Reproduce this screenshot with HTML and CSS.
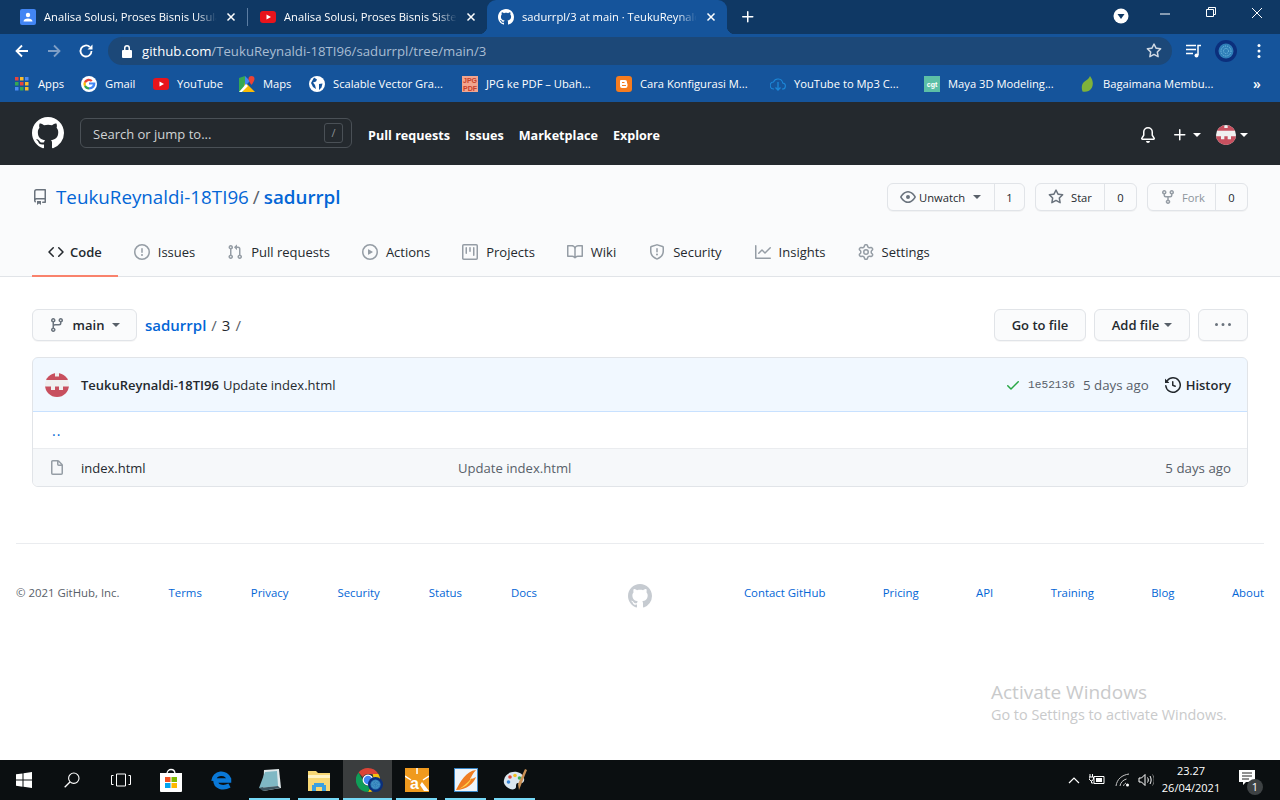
FILE: index.html
```html
<!DOCTYPE html>
<html lang="en">
<head>
<meta charset="utf-8">
<title>sadurrpl/3 at main</title>
<link rel="stylesheet" href="styles.css">
</head>
<body>
<svg class="defs" width="0" height="0" aria-hidden="true">
  <symbol id="i-mark" viewBox="0 0 16 16"><path fill-rule="evenodd" d="M8 0C3.58 0 0 3.58 0 8c0 3.54 2.29 6.53 5.47 7.59.4.07.55-.17.55-.38 0-.19-.01-.82-.01-1.49-2.01.37-2.53-.49-2.69-.94-.09-.23-.48-.94-.82-1.13-.28-.15-.68-.52-.01-.53.63-.01 1.08.58 1.23.82.72 1.21 1.87.87 2.33.66.07-.52.28-.87.51-1.07-1.78-.2-3.64-.89-3.64-3.95 0-.87.31-1.59.82-2.15-.08-.2-.36-1.02.08-2.12 0 0 .67-.21 2.2.82.64-.18 1.32-.27 2-.27.68 0 1.36.09 2 .27 1.53-1.04 2.2-.82 2.2-.82.44 1.1.16 1.92.08 2.12.51.56.82 1.27.82 2.15 0 3.07-1.87 3.75-3.65 3.95.29.25.54.73.54 1.48 0 1.07-.01 1.93-.01 2.2 0 .21.15.46.55.38A8.013 8.013 0 0016 8c0-4.42-3.58-8-8-8z"/></symbol>
  <symbol id="i-code" viewBox="0 0 16 16"><path fill-rule="evenodd" d="M4.72 3.22a.75.75 0 011.06 1.06L2.06 8l3.72 3.72a.75.75 0 11-1.06 1.06L.47 8.53a.75.75 0 010-1.06l4.25-4.25zm6.56 0a.75.75 0 10-1.06 1.06L13.94 8l-3.72 3.72a.75.75 0 101.06 1.06l4.25-4.25a.75.75 0 000-1.06l-4.25-4.25z"/></symbol>
  <symbol id="i-issue" viewBox="0 0 16 16"><path fill-rule="evenodd" d="M8 1.5a6.5 6.5 0 100 13 6.5 6.5 0 000-13zM0 8a8 8 0 1116 0A8 8 0 010 8zm9 3a1 1 0 11-2 0 1 1 0 012 0zm-.25-6.25a.75.75 0 00-1.5 0v3.5a.75.75 0 001.5 0v-3.5z"/></symbol>
  <symbol id="i-pr" viewBox="0 0 16 16"><path fill-rule="evenodd" d="M7.177 3.073L9.573.677A.25.25 0 0110 .854v4.792a.25.25 0 01-.427.177L7.177 3.427a.25.25 0 010-.354zM3.75 2.5a.75.75 0 100 1.5.75.75 0 000-1.5zm-2.25.75a2.25 2.25 0 113 2.122v5.256a2.251 2.251 0 11-1.5 0V5.372A2.25 2.25 0 011.5 3.25zM11 2.5h-1V4h1a1 1 0 011 1v5.628a2.251 2.251 0 101.5 0V5A2.5 2.5 0 0011 2.5zm1 10.25a.75.75 0 111.5 0 .75.75 0 01-1.5 0zM3.75 12a.75.75 0 100 1.5.75.75 0 000-1.5z"/></symbol>
  <symbol id="i-play" viewBox="0 0 16 16"><path fill-rule="evenodd" d="M1.5 8a6.5 6.5 0 1113 0 6.5 6.5 0 01-13 0zM8 0a8 8 0 100 16A8 8 0 008 0zM6.379 5.227A.25.25 0 006 5.442v5.117a.25.25 0 00.379.214l4.264-2.559a.25.25 0 000-.428L6.379 5.227z"/></symbol>
  <symbol id="i-project" viewBox="0 0 16 16"><path fill-rule="evenodd" d="M1.75 0A1.75 1.75 0 000 1.75v12.5C0 15.216.784 16 1.75 16h12.5A1.75 1.75 0 0016 14.25V1.75A1.75 1.75 0 0014.25 0H1.75zM1.5 1.75a.25.25 0 01.25-.25h12.5a.25.25 0 01.25.25v12.5a.25.25 0 01-.25.25H1.75a.25.25 0 01-.25-.25V1.75zM11.75 3a.75.75 0 00-.75.75v7.5a.75.75 0 001.5 0v-7.5a.75.75 0 00-.75-.75zm-8.25.75a.75.75 0 011.5 0v5.5a.75.75 0 01-1.5 0v-5.5zM8 3a.75.75 0 00-.75.75v3.5a.75.75 0 001.5 0v-3.5A.75.75 0 008 3z"/></symbol>
  <symbol id="i-book" viewBox="0 0 16 16"><path fill-rule="evenodd" d="M0 1.75A.75.75 0 01.75 1h4.253c1.227 0 2.317.59 3 1.501A3.744 3.744 0 0111.006 1h4.245a.75.75 0 01.75.75v10.5a.75.75 0 01-.75.75h-4.507a2.25 2.25 0 00-1.591.659l-.622.621a.75.75 0 01-1.06 0l-.622-.621A2.25 2.25 0 005.258 13H.75a.75.75 0 01-.75-.75V1.75zm8.755 3a2.25 2.25 0 012.25-2.25H14.5v9h-3.757c-.71 0-1.4.201-1.992.572l.004-7.322zm-1.504 7.324l.004-5.073-.002-2.253A2.25 2.25 0 005.003 2.5H1.5v9h3.757a3.75 3.75 0 011.994.574z"/></symbol>
  <symbol id="i-shield" viewBox="0 0 16 16"><path fill-rule="evenodd" d="M7.467.133a1.75 1.75 0 011.066 0l5.25 1.68A1.75 1.75 0 0115 3.48V7c0 1.566-.32 3.182-1.303 4.682-.983 1.498-2.585 2.813-5.032 3.855a1.7 1.7 0 01-1.33 0c-2.447-1.042-4.049-2.357-5.032-3.855C1.32 10.182 1 8.566 1 7V3.48a1.75 1.75 0 011.217-1.667l5.25-1.68zm.61 1.429a.25.25 0 00-.153 0l-5.25 1.68a.25.25 0 00-.174.238V7c0 1.358.275 2.666 1.057 3.86.784 1.194 2.121 2.34 4.366 3.297a.2.2 0 00.154 0c2.245-.956 3.582-2.104 4.366-3.298C13.225 9.666 13.5 8.36 13.5 7V3.48a.25.25 0 00-.174-.237l-5.25-1.68zM9 10.5a1 1 0 11-2 0 1 1 0 012 0zm-.25-5.75a.75.75 0 10-1.5 0v3a.75.75 0 001.5 0v-3z"/></symbol>
  <symbol id="i-graph" viewBox="0 0 16 16"><path fill-rule="evenodd" d="M1.5 1.75a.75.75 0 00-1.5 0v12.5c0 .414.336.75.75.75h14.5a.75.75 0 000-1.5H1.5V1.75zm14.28 2.53a.75.75 0 00-1.06-1.06L10 7.94 7.53 5.47a.75.75 0 00-1.06 0L3.22 8.72a.75.75 0 001.06 1.06L7 7.06l2.47 2.47a.75.75 0 001.06 0l5.25-5.25z"/></symbol>
  <symbol id="i-gear" viewBox="0 0 16 16"><path fill-rule="evenodd" d="M7.429 1.525a6.593 6.593 0 011.142 0c.036.003.108.036.137.146l.289 1.105c.147.56.55.967.997 1.189.174.086.341.183.501.29.417.278.97.423 1.53.27l1.102-.303c.11-.03.175.016.195.046.219.31.41.641.573.989.014.031.022.11-.059.19l-.815.806c-.411.406-.562.957-.53 1.456a4.588 4.588 0 010 .582c-.032.499.119 1.05.53 1.456l.815.806c.08.08.073.159.059.19a6.494 6.494 0 01-.573.99c-.02.029-.086.074-.195.045l-1.103-.303c-.559-.153-1.112-.008-1.529.27-.16.107-.327.204-.5.29-.449.222-.851.628-.998 1.189l-.289 1.105c-.029.11-.101.143-.137.146a6.613 6.613 0 01-1.142 0c-.036-.003-.108-.037-.137-.146l-.289-1.105c-.147-.56-.55-.967-.997-1.189a4.502 4.502 0 01-.501-.29c-.417-.278-.97-.423-1.53-.27l-1.102.303c-.11.03-.175-.016-.195-.046a6.492 6.492 0 01-.573-.989c-.014-.031-.022-.11.059-.19l.815-.806c.411-.406.562-.957.53-1.456a4.587 4.587 0 010-.582c.032-.499-.119-1.05-.53-1.456l-.815-.806c-.08-.08-.073-.159-.059-.19a6.44 6.44 0 01.573-.99c.02-.029.086-.075.195-.045l1.103.303c.559.153 1.112.008 1.529-.27.16-.107.327-.204.5-.29.449-.222.851-.628.998-1.189l.289-1.105c.029-.11.101-.143.137-.146zM8 0c-.236 0-.47.01-.701.03-.743.065-1.29.615-1.458 1.261l-.29 1.106c-.017.066-.078.158-.211.224a5.994 5.994 0 00-.668.386c-.123.082-.233.09-.3.071L3.27 2.776c-.644-.177-1.392.02-1.82.63a7.977 7.977 0 00-.704 1.217c-.315.675-.111 1.422.363 1.891l.815.806c.05.048.098.147.088.294a6.084 6.084 0 000 .772c.01.147-.038.246-.088.294l-.815.806c-.474.469-.678 1.216-.363 1.891.2.428.436.835.704 1.218.428.609 1.176.806 1.82.63l1.103-.303c.066-.019.176-.011.299.071.213.143.436.272.668.386.133.066.194.158.212.224l.289 1.106c.169.646.715 1.196 1.458 1.26a8.094 8.094 0 001.402 0c.743-.064 1.29-.614 1.458-1.26l.29-1.106c.017-.066.078-.158.211-.224a5.98 5.98 0 00.668-.386c.123-.082.233-.09.3-.071l1.102.302c.644.177 1.392-.02 1.82-.63.268-.382.505-.789.704-1.217.315-.675.111-1.422-.364-1.891l-.814-.806c-.05-.048-.098-.147-.088-.294a6.1 6.1 0 000-.772c-.01-.147.039-.246.088-.294l.814-.806c.475-.469.679-1.216.364-1.891a7.992 7.992 0 00-.704-1.218c-.428-.609-1.176-.806-1.82-.63l-1.103.303c-.066.019-.176.011-.299-.071a5.991 5.991 0 00-.668-.386c-.133-.066-.194-.158-.212-.224L10.16 1.29C9.99.645 9.444.095 8.701.031A8.094 8.094 0 008 0zm1.5 8a1.5 1.5 0 11-3 0 1.5 1.5 0 013 0zM11 8a3 3 0 11-6 0 3 3 0 016 0z"/></symbol>
  <symbol id="i-repo" viewBox="0 0 16 16"><path fill-rule="evenodd" d="M2 2.5A2.5 2.5 0 014.5 0h8.75a.75.75 0 01.75.75v12.5a.75.75 0 01-.75.75h-2.5a.75.75 0 110-1.5h1.75v-2h-8a1 1 0 00-.714 1.7.75.75 0 01-1.072 1.05A2.495 2.495 0 012 11.5v-9zm10.5-1V9h-8c-.356 0-.694.074-1 .208V2.5a1 1 0 011-1h8zM5 12.25v3.25a.25.25 0 00.4.2l1.45-1.087a.25.25 0 01.3 0L8.6 15.7a.25.25 0 00.4-.2v-3.25a.25.25 0 00-.25-.25h-3.5a.25.25 0 00-.25.25z"/></symbol>
  <symbol id="i-eye" viewBox="0 0 16 16"><path fill-rule="evenodd" d="M1.679 7.932c.412-.621 1.242-1.75 2.366-2.717C5.175 4.242 6.527 3.5 8 3.5c1.473 0 2.824.742 3.955 1.715 1.124.967 1.954 2.096 2.366 2.717a.119.119 0 010 .136c-.412.621-1.242 1.75-2.366 2.717C10.825 11.758 9.473 12.5 8 12.5c-1.473 0-2.824-.742-3.955-1.715C2.92 9.818 2.09 8.69 1.679 8.068a.119.119 0 010-.136zM8 2c-1.981 0-3.67.992-4.933 2.078C1.797 5.169.88 6.423.43 7.1a1.619 1.619 0 000 1.798c.45.678 1.367 1.932 2.637 3.024C4.329 13.008 6.019 14 8 14c1.981 0 3.67-.992 4.933-2.078 1.27-1.091 2.187-2.345 2.637-3.023a1.619 1.619 0 000-1.798c-.45-.678-1.367-1.932-2.637-3.023C11.671 2.992 9.981 2 8 2zm0 8a2 2 0 100-4 2 2 0 000 4z"/></symbol>
  <symbol id="i-star" viewBox="0 0 16 16"><path fill-rule="evenodd" d="M8 .25a.75.75 0 01.673.418l1.882 3.815 4.21.612a.75.75 0 01.416 1.279l-3.046 2.97.719 4.192a.75.75 0 01-1.088.791L8 12.347l-3.766 1.98a.75.75 0 01-1.088-.79l.72-4.194L.818 6.374a.75.75 0 01.416-1.28l4.21-.611L7.327.668A.75.75 0 018 .25zm0 2.445L6.615 5.5a.75.75 0 01-.564.41l-3.097.45 2.24 2.184a.75.75 0 01.216.664l-.528 3.084 2.769-1.456a.75.75 0 01.698 0l2.77 1.456-.53-3.084a.75.75 0 01.216-.664l2.24-2.183-3.096-.45a.75.75 0 01-.564-.41L8 2.694v.001z"/></symbol>
  <symbol id="i-fork" viewBox="0 0 16 16"><path fill-rule="evenodd" d="M5 3.25a.75.75 0 11-1.5 0 .75.75 0 011.5 0zm0 2.122a2.25 2.25 0 10-1.5 0v.878A2.25 2.25 0 005.75 8.5h1.5v2.128a2.251 2.251 0 101.5 0V8.5h1.5a2.25 2.25 0 002.25-2.25v-.878a2.25 2.25 0 10-1.5 0v.878a.75.75 0 01-.75.75h-4.5A.75.75 0 015 6.25v-.878zm3.75 7.378a.75.75 0 11-1.5 0 .75.75 0 011.5 0zm3-8.75a.75.75 0 100-1.5.75.75 0 000 1.5z"/></symbol>
  <symbol id="i-branch" viewBox="0 0 16 16"><path fill-rule="evenodd" d="M11.75 2.5a.75.75 0 100 1.5.75.75 0 000-1.5zm-2.25.75a2.25 2.25 0 113 2.122V6A2.5 2.5 0 0110 8.5H6a1 1 0 00-1 1v1.128a2.251 2.251 0 11-1.5 0V5.372a2.25 2.25 0 111.5 0v1.836A2.492 2.492 0 016 7h4a1 1 0 001-1v-.628A2.25 2.25 0 019.5 3.25zM4.25 12a.75.75 0 100 1.5.75.75 0 000-1.5zM3.5 3.25a.75.75 0 111.5 0 .75.75 0 01-1.5 0z"/></symbol>
  <symbol id="i-check" viewBox="0 0 16 16"><path fill-rule="evenodd" d="M13.78 4.22a.75.75 0 010 1.06l-7.25 7.25a.75.75 0 01-1.06 0L2.22 9.28a.75.75 0 011.06-1.06L6 10.94l6.72-6.72a.75.75 0 011.06 0z"/></symbol>
  <symbol id="i-history" viewBox="0 0 16 16"><path fill-rule="evenodd" d="M1.643 3.143L.427 1.927A.25.25 0 000 2.104V5.75c0 .138.112.25.25.25h3.646a.25.25 0 00.177-.427L2.715 4.215a6.5 6.5 0 11-1.18 4.458.75.75 0 10-1.493.154 8.001 8.001 0 101.6-5.684zM7.75 4a.75.75 0 01.75.75v2.992l2.028.812a.75.75 0 01-.557 1.392l-2.5-1A.75.75 0 017 8.25v-3.5A.75.75 0 017.75 4z"/></symbol>
  <symbol id="i-file" viewBox="0 0 16 16"><path fill-rule="evenodd" d="M3.75 1.5a.25.25 0 00-.25.25v11.5c0 .138.112.25.25.25h8.5a.25.25 0 00.25-.25V6H9.75A1.75 1.75 0 018 4.25V1.5H3.75zm5.75.56v2.19c0 .138.112.25.25.25h2.19L9.5 2.06zM2 1.75C2 .784 2.784 0 3.75 0h5.086c.464 0 .909.184 1.237.513l3.414 3.414c.329.328.513.773.513 1.237v8.086A1.75 1.75 0 0112.25 15h-8.5A1.75 1.75 0 012 13.25V1.75z"/></symbol>
  <symbol id="i-bell" viewBox="0 0 16 16"><path d="M8 16a2 2 0 001.985-1.75c.017-.137-.097-.25-.235-.25h-3.5c-.138 0-.252.113-.235.25A2 2 0 008 16z"/><path fill-rule="evenodd" d="M3 5a5 5 0 0110 0v2.947c0 .05.015.098.042.139l1.703 2.555A1.518 1.518 0 0113.482 13H2.518a1.518 1.518 0 01-1.263-2.36l1.703-2.554A.25.25 0 003 7.947V5zm5-3.5A3.5 3.5 0 004.5 5v2.947c0 .346-.102.683-.294.97l-1.703 2.556a.018.018 0 00-.003.01l.001.006c0 .002.002.004.004.006a.017.017 0 00.006.004l.007.001h10.964l.007-.001a.018.018 0 00.006-.004.016.016 0 00.004-.006l.001-.007a.017.017 0 00-.003-.01l-1.703-2.554a1.75 1.75 0 01-.294-.97V5A3.5 3.5 0 008 1.5z"/></symbol>
  <symbol id="i-plus" viewBox="0 0 16 16"><path fill-rule="evenodd" d="M7.75 2a.75.75 0 01.75.75V7h4.25a.75.75 0 110 1.5H8.5v4.25a.75.75 0 11-1.5 0V8.5H2.75a.75.75 0 010-1.5H7V2.75A.75.75 0 017.75 2z"/></symbol>
  <symbol id="i-kebab" viewBox="0 0 16 16"><path d="M8 9a1.5 1.5 0 100-3 1.5 1.5 0 000 3zM1.5 9a1.5 1.5 0 100-3 1.5 1.5 0 000 3zm13 0a1.5 1.5 0 100-3 1.5 1.5 0 000 3z"/></symbol>
  <symbol id="i-x" viewBox="0 0 10 10"><path d="M1.5 1.5l7 7m0-7l-7 7" fill="none" stroke="currentColor" stroke-width="1.5"/></symbol>
  <symbol id="i-yt" viewBox="0 0 16 16"><rect x="0" y="2" width="16" height="12" rx="3" fill="#e8141c"/><path d="M6.5 5.5v5L11 8z" fill="#fff"/></symbol>
  <clipPath id="avatar-clip"><circle cx="12" cy="12" r="12"/></clipPath>
  <symbol id="i-avatar" viewBox="0 0 24 24"><g clip-path="url(#avatar-clip)"><rect width="24" height="24" fill="#f0f0f0"/><path d="M0 0h10v3.500h4V0h10v7H0z" fill="#c8505f"/><path d="M0 13.500h6v3.500h4v-3.500h4v3.500h4v-3.500h6V24H0z" fill="#c8505f"/></g></symbol>
  <symbol id="i-chrome" viewBox="0 0 16 16"><path d="M8 0a8 8 0 0 1 6.930 4H8a4 4 0 0 0-3.460 2L1.700 3A8 8 0 0 1 8 0z" fill="#db4437"/><path d="M14.930 4A8 8 0 0 1 8 16l3.460-6A4 4 0 0 0 11.460 6 4 4 0 0 0 11 4z" fill="#f4c20d"/><path d="M8 16A8 8 0 0 1 1.700 3l2.840 5A4 4 0 0 0 8 12l1.900 0L8 16z" fill="#0f9d58"/><circle cx="8" cy="8" r="3.200" fill="#4285f4" stroke="#fff" stroke-width=".8"/></symbol>
  <symbol id="i-globe" viewBox="0 0 22 22"><circle cx="11" cy="11" r="11" fill="#0b2f7c"/><circle cx="11" cy="11" r="7.500" fill="#2f7fb8"/><circle cx="11" cy="11" r="5" fill="none" stroke="#7cc3e6" stroke-width="1" stroke-dasharray="1 1"/><circle cx="11" cy="11" r="2.500" fill="none" stroke="#7cc3e6" stroke-width="1" stroke-dasharray="1 1"/></symbol>
</svg>

<header class="tabstrip">
  <div class="tab">
    <svg class="fav" viewBox="0 0 16 16"><rect width="16" height="16" rx="2" fill="#4285f4"/><circle cx="8" cy="6" r="2.200" fill="#fff"/><path d="M3.500 12.500c0-2 2-3 4.500-3s4.500 1 4.500 3z" fill="#fff"/></svg>
    <span class="tab-title">Analisa Solusi, Proses Bisnis Usula</span>
    <svg class="tab-x"><use href="#i-x"/></svg>
  </div>
  <div class="tab tab-sep">
    <svg class="fav"><use href="#i-yt"/></svg>
    <span class="tab-title">Analisa Solusi, Proses Bisnis Sister</span>
    <svg class="tab-x"><use href="#i-x"/></svg>
  </div>
  <div class="tab tab-active">
    <svg class="fav fav-white"><use href="#i-mark"/></svg>
    <span class="tab-title">sadurrpl/3 at main · TeukuReynald</span>
    <svg class="tab-x"><use href="#i-x"/></svg>
  </div>
  <svg class="newtab"><use href="#i-plus"/></svg>
  <div class="strip-right">
    <svg class="media-drop" viewBox="0 0 16 16"><circle cx="8" cy="8" r="7.500" fill="#fff"/><path d="M4.500 6h7L8 11z" fill="#0f3864"/></svg>
    <svg class="win-btn" viewBox="0 0 46 20"><path d="M18 14h10" stroke="#fff" fill="none"/></svg>
    <svg class="win-btn" viewBox="0 0 46 20"><path d="M18.500 9.500h7v7h-7zM20.500 9.500v-2h7v7h-2" stroke="#fff" fill="none"/></svg>
    <svg class="win-btn" viewBox="0 0 46 20"><path d="M18 8l10 10m0-10l-10 10" stroke="#fff" fill="none"/></svg>
  </div>
</header>

<nav class="toolbar">
  <svg class="tool" viewBox="0 0 16 16"><path d="M14 8H3m5-5.500L2.500 8 8 13.500" fill="none" stroke="#fff" stroke-width="1.800"/></svg>
  <svg class="tool" viewBox="0 0 16 16"><path d="M2 8h11m-5-5.500L13.500 8 8 13.500" fill="none" stroke="#7f9fc6" stroke-width="1.800"/></svg>
  <svg class="tool" viewBox="0 0 16 16"><path d="M13.500 8A5.500 5.500 0 1 1 11.800 4" fill="none" stroke="#fff" stroke-width="1.800"/><path d="M14.500 1.500v5h-5z" fill="#fff"/></svg>
  <div class="omnibox">
    <svg class="lock" viewBox="0 0 12 14"><path d="M3 6V4a3 3 0 0 1 6 0v2h1a1 1 0 0 1 1 1v6a1 1 0 0 1-1 1H2a1 1 0 0 1-1-1V7a1 1 0 0 1 1-1zm1.500 0h3V4a1.500 1.500 0 0 0-3 0z" fill="#fff"/></svg>
    <span class="url"><b class="url-host">github.com</b>/TeukuReynaldi-18TI96/sadurrpl/tree/main/3</span>
    <svg class="omni-star"><use href="#i-star"/></svg>
  </div>
  <svg class="media-q" viewBox="0 0 16 16"><path d="M0 2.500h10M0 6.500h10M0 10.500h7" stroke="#fff" stroke-width="1.500" fill="none"/><path d="M12 12V2.500h3" stroke="#fff" stroke-width="1.500" fill="none"/><circle cx="10.500" cy="12.500" r="2" fill="#fff"/></svg>
  <svg class="profile"><use href="#i-globe"/></svg>
  <svg class="dots" viewBox="0 0 4 16"><circle cx="2" cy="2.500" r="1.500" fill="#fff"/><circle cx="2" cy="8" r="1.500" fill="#fff"/><circle cx="2" cy="13.500" r="1.500" fill="#fff"/></svg>
</nav>

<div class="bookmarks">
  <div class="bm"><svg class="bm-ic bm-apps" viewBox="0 0 14 14"><path d="M0 0h3.500v3.500H0z" fill="#e8453c"/><path d="M5 0h3.500v3.500H5z" fill="#f9bb2d"/><path d="M10 0h3.500v3.500H10z" fill="#4a8af4"/><path d="M0 5h3.500v3.500H0z" fill="#34a853"/><path d="M5 5h3.500v3.500H5z" fill="#e8453c"/><path d="M10 5h3.500v3.500H10z" fill="#f9bb2d"/><path d="M0 10h3.500v3.500H0z" fill="#4a8af4"/><path d="M5 10h3.500v3.500H5z" fill="#34a853"/><path d="M10 10h3.500v3.500H10z" fill="#f9bb2d"/></svg><span>Apps</span></div>
  <div class="bm"><svg class="bm-ic" viewBox="0 0 16 16"><circle cx="8" cy="8" r="8" fill="#fff"/><path d="M8 6.500h6.300c.5 3.800-2 7-6.300 7v-2.300c2 0 3.500-1 3.900-2.600H8z" fill="#4285f4"/><path d="M8 11.200v2.300a5.500 5.500 0 0 1-5-3l1.900-1.500c.5 1.300 1.700 2.200 3.100 2.200z" fill="#34a853"/><path d="M4.900 9L3 10.500a5.500 5.500 0 0 1 0-5L4.900 7a3.300 3.300 0 0 0 0 2z" fill="#fbbc05"/><path d="M3 5.500a5.500 5.500 0 0 1 8.600-1.300L10 5.800A3.300 3.300 0 0 0 4.900 7z" fill="#ea4335"/></svg><span>Gmail</span></div>
  <div class="bm"><svg class="bm-ic"><use href="#i-yt"/></svg><span>YouTube</span></div>
  <div class="bm"><svg class="bm-ic" viewBox="0 0 16 16"><path d="M0 2l6-2v16l-6 0z" fill="#34a853"/><path d="M6 6L16 16H4z" fill="#fbbc05"/><path d="M6 0l5 5-5 5z" fill="#4285f4"/><path d="M0 16l7-8 2 2-6 6z" fill="#fff"/><path d="M12.500 0A3 3 0 0 0 9.500 3c0 2 3 6 3 6s3-4 3-6a3 3 0 0 0-3-3z" fill="#ea4335"/></svg><span>Maps</span></div>
  <div class="bm"><svg class="bm-ic" viewBox="0 0 16 16"><circle cx="8" cy="8" r="8" fill="#fff"/><path d="M5 1.500l3 2-1 2-3 1 2 2.500 1 4-3-2-2-4zM10 8l3.500-.5-1 4-2.500 2.500z" fill="#14549c"/></svg><span>Scalable Vector Gra...</span></div>
  <div class="bm"><svg class="bm-ic" viewBox="0 0 16 16"><rect width="16" height="16" fill="#f2a58e"/><text x="8" y="7" class="tiny-svg">JPG</text><text x="8" y="14.500" class="tiny-svg">PDF</text></svg><span>JPG ke PDF – Ubah...</span></div>
  <div class="bm"><svg class="bm-ic" viewBox="0 0 16 16"><rect width="16" height="16" rx="3" fill="#f57c1f"/><path d="M5 4h4a2 2 0 0 1 2 2v1a1 1 0 0 0 .5.800V10a2 2 0 0 1-2 2H6a2 2 0 0 1-2-2V5a1 1 0 0 1 1-1z" fill="#fff"/><path d="M6 6h2.500v1H6zM6 9h4v1H6z" fill="#f57c1f"/></svg><span>Cara Konfigurasi M...</span></div>
  <div class="bm"><svg class="bm-ic" viewBox="0 0 16 16"><path d="M4 13a3.500 3.500 0 0 1-.5-7 4.800 4.800 0 0 1 9.200 1A3 3 0 0 1 12 13" fill="none" stroke="#1c87d8" stroke-width="1.100"/><path d="M8 6v8m-2.500-2.500L8 14l2.500-2.500" fill="none" stroke="#1c87d8" stroke-width="1.300"/></svg><span>YouTube to Mp3 C...</span></div>
  <div class="bm"><svg class="bm-ic" viewBox="0 0 16 16"><rect width="16" height="16" fill="#5cbfa6"/><text x="8" y="10.500" class="tiny-svg tiny-white">cgt</text></svg><span>Maya 3D Modeling...</span></div>
  <div class="bm"><svg class="bm-ic" viewBox="0 0 16 16"><path d="M11 0C14 4 14.500 8 13 11.500 11.500 15 7 16.500 3.500 15.500 2 11 3 8 5 6c2-2 5-3 6-6z" fill="#7fb23a"/></svg><span>Bagaimana Membu...</span></div>
  <span class="bm-more">»</span>
</div>

<header class="gh-head">
  <svg class="gh-logo"><use href="#i-mark"/></svg>
  <div class="gh-search"><span class="gh-search-text">Search or jump to...</span><kbd class="gh-slash">/</kbd></div>
  <a class="gh-link">Pull requests</a>
  <a class="gh-link">Issues</a>
  <a class="gh-link">Marketplace</a>
  <a class="gh-link">Explore</a>
  <div class="gh-right">
    <svg class="gh-ic"><use href="#i-bell"/></svg>
    <svg class="gh-ic gh-plus"><use href="#i-plus"/></svg>
    <i class="caret caret-white"></i>
    <svg class="gh-avatar"><use href="#i-avatar"/></svg>
    <i class="caret caret-white"></i>
  </div>
</header>

<section class="repo-head">
  <div class="repo-title-row">
    <h1 class="repo-title">
      <svg class="ic ic-muted repo-ic"><use href="#i-repo"/></svg>
      <a class="link">TeukuReynaldi-18TI96</a><span class="repo-slash">/</span><a class="link repo-name">sadurrpl</a>
    </h1>
    <div class="repo-actions">
      <div class="pair"><span class="pair-main w-unwatch"><svg class="ic ic-muted"><use href="#i-eye"/></svg>Unwatch<i class="caret caret-dark caret-gap"></i></span><span class="pair-count c-1">1</span></div>
      <div class="pair"><span class="pair-main w-star"><svg class="ic ic-muted"><use href="#i-star"/></svg>Star</span><span class="pair-count c-2">0</span></div>
      <div class="pair"><span class="pair-main w-fork pair-dim"><svg class="ic ic-dim"><use href="#i-fork"/></svg>Fork</span><span class="pair-count c-3">0</span></div>
    </div>
  </div>
  <nav class="repo-tabs">
    <a class="rtab rtab-on"><svg class="ic ic-dark"><use href="#i-code"/></svg>Code</a>
    <a class="rtab"><svg class="ic ic-dim"><use href="#i-issue"/></svg>Issues</a>
    <a class="rtab"><svg class="ic ic-dim"><use href="#i-pr"/></svg>Pull requests</a>
    <a class="rtab"><svg class="ic ic-dim"><use href="#i-play"/></svg>Actions</a>
    <a class="rtab"><svg class="ic ic-dim"><use href="#i-project"/></svg>Projects</a>
    <a class="rtab"><svg class="ic ic-dim"><use href="#i-book"/></svg>Wiki</a>
    <a class="rtab rtab-nudge"><svg class="ic ic-dim"><use href="#i-shield"/></svg>Security</a>
    <a class="rtab rtab-nudge"><svg class="ic ic-dim"><use href="#i-graph"/></svg>Insights</a>
    <a class="rtab"><svg class="ic ic-dim"><use href="#i-gear"/></svg>Settings</a>
  </nav>
</section>

<main class="content">
  <div class="path-row">
    <button class="btn btn-branch"><svg class="ic ic-muted"><use href="#i-branch"/></svg><span>main</span><i class="caret caret-dark"></i></button>
    <div class="crumbs"><a class="link crumb-root">sadurrpl</a><span class="crumb-sep">/</span><span class="crumb-cur">3</span><span class="crumb-sep">/</span></div>
    <div class="path-actions">
      <button class="btn btn-goto">Go to file</button>
      <button class="btn btn-add">Add file<i class="caret caret-dark"></i></button>
      <button class="btn btn-more"><svg class="ic ic-muted"><use href="#i-kebab"/></svg></button>
    </div>
  </div>

  <div class="filebox">
    <div class="commit">
      <svg class="commit-avatar"><use href="#i-avatar"/></svg>
      <span class="commit-author">TeukuReynaldi-18TI96</span>
      <span class="commit-msg">Update index.html</span>
      <div class="commit-right">
        <svg class="ic ic-green"><use href="#i-check"/></svg>
        <code class="sha">1e52136</code>
        <span class="age">5 days ago</span>
        <span class="history"><svg class="ic ic-dark"><use href="#i-history"/></svg>History</span>
      </div>
    </div>
    <div class="row row-up"><a class="link up">..</a></div>
    <div class="row row-file">
      <svg class="ic ic-file"><use href="#i-file"/></svg>
      <span class="fname">index.html</span>
      <span class="fmsg">Update index.html</span>
      <span class="age fage">5 days ago</span>
    </div>
  </div>
</main>

<footer class="footer">
  <div class="foot-inner">
    <div class="foot-group foot-left"><span class="foot-copy">© 2021 GitHub, Inc.</span><a class="link">Terms</a><a class="link">Privacy</a><a class="link">Security</a><a class="link">Status</a><a class="link">Docs</a></div>
    <svg class="foot-logo"><use href="#i-mark"/></svg>
    <div class="foot-group foot-right"><a class="link">Contact GitHub</a><a class="link">Pricing</a><a class="link">API</a><a class="link">Training</a><a class="link">Blog</a><a class="link">About</a></div>
  </div>
</footer>

<aside class="activate"><div class="act-1">Activate Windows</div><div class="act-2">Go to Settings to activate Windows.</div></aside>

<footer class="taskbar">
  <div class="tb-item"><svg class="tb-ic tb-win" viewBox="0 0 16 16"><path d="M0 2.300l6.500-.9v6.200H0zM7.500 1.300L16 0v7.600H7.500zM0 8.600h6.500v6.100L0 13.800zM7.500 8.600H16V16l-8.500-1.200z" fill="#fff"/></svg></div>
  <div class="tb-item"><svg class="tb-ic" viewBox="0 0 16 16"><circle cx="9.800" cy="6.200" r="5.200" fill="none" stroke="#fff" stroke-width="1.100"/><path d="M6 10L.7 15.300" stroke="#fff" stroke-width="1.300"/></svg></div>
  <div class="tb-item tb-task"><svg class="tb-ic tb-wide" viewBox="0 0 20 14"><path d="M5.500 1h9v12h-9z" fill="none" stroke="#fff"/><path d="M2.500 2.500H.5v9h2M17.500 2.500h2v9h-2" fill="none" stroke="#fff"/></svg></div>
  <div class="tb-item tb-store"><svg class="tb-ic tb-big" viewBox="0 0 24 24"><path d="M8 6c0-6 8-6 8 0" fill="none" stroke="#fff" stroke-width="1.300"/><path d="M1 5h22v18a1 1 0 0 1-1 1H2a1 1 0 0 1-1-1z" fill="#fff"/><path d="M6 9h5.500v5H6z" fill="#f25022"/><path d="M12.500 9H18v5h-5.500z" fill="#7fba00"/><path d="M6 15h5.500v5H6z" fill="#00a4ef"/><path d="M12.500 15H18v5h-5.500z" fill="#ffb900"/></svg></div>
  <div class="tb-item tb-edge"><svg class="tb-ic tb-big" viewBox="0 0 24 24"><path d="M4.500 13a8 8 0 0 1 15.500-2v1.500H7M6.500 12.500c0 6.500 7.500 8.500 14 5" fill="none" stroke="#0a78d7" stroke-width="4.500"/></svg></div>
  <div class="tb-item tb-open"><svg class="tb-ic tb-big" viewBox="0 0 24 24"><path d="M6 2L21 1l2 19-18 3z" fill="#dfe8ea"/><path d="M1 20L7 4l12-1 1 15z" fill="#7fb8c4"/><path d="M1 20l19-2 2 2-17 3z" fill="#3d5560"/></svg></div>
  <div class="tb-item tb-open"><svg class="tb-ic tb-big" viewBox="0 0 24 24"><path d="M1 3h8l2 2h12v18H1z" fill="#f7d774"/><path d="M1 7h22v3H1z" fill="#fff3c4"/><path d="M7 15h10v2h2v6h-4v-4H9v4H5v-6h2z" fill="#3aa0e0"/></svg></div>
  <div class="tb-item tb-chrome tb-open">
    <svg class="tb-ic tb-big"><use href="#i-chrome"/></svg>
    <svg class="tb-badge"><use href="#i-globe"/></svg>
  </div>
  <div class="tb-item tb-open"><svg class="tb-ic tb-big" viewBox="0 0 24 24"><rect width="24" height="24" fill="#f09a1e"/><path d="M12 0v6M0 8l6 4M24 8l-6 4" stroke="#fff" stroke-width="1.500"/><text x="5" y="21" class="tb-a">a</text><path d="M17 14l7 9h-5l-4-6z" fill="#fff"/></svg></div>
  <div class="tb-item tb-open"><svg class="tb-ic tb-big" viewBox="0 0 24 24"><rect x=".5" y=".5" width="23" height="23" fill="#eef4fa" stroke="#3a87c8"/><path d="M2 22C6 14 12 3 22 2c-3 3-4 6-6 9 2 0 4-1 6-2-2 6-9 13-20 13z" fill="#ef7d22"/><path d="M5 21c3-2 9-6 13-12-1 4-5 10-13 12z" fill="#ffd24a"/></svg></div>
  <div class="tb-item tb-open"><svg class="tb-ic tb-big" viewBox="0 0 24 24"><path d="M1 12C2 6 8 3 14 4c5 1 8 5 7 9-1 3-4 2-6 2s-2 2-2 4-3 3-6 2c-4-2-7-5-6-9z" fill="#dbe6ef"/><circle cx="7" cy="9" r="1.800" fill="#e0483c"/><circle cx="12" cy="7.500" r="1.800" fill="#f4c020"/><circle cx="16.500" cy="10" r="1.800" fill="#3cb054"/><circle cx="5.500" cy="14" r="1.800" fill="#3a87d8"/><path d="M15 16L22 1l2 1-6 15-2 5z" fill="#c99055"/></svg></div>

  <div class="tray">
    <svg class="tray-ic tray-caret" viewBox="0 0 12 8"><path d="M1 7l5-5 5 5" fill="none" stroke="#fff" stroke-width="1.200"/></svg>
    <svg class="tray-ic tray-batt" viewBox="0 0 16 12"><path d="M1 0v3M3.500 0v3M0 3h4.500v2L3 7H2L0 5zM2.500 7v2h2" fill="none" stroke="#fff"/><path d="M5 2.500h10v7H5z" fill="none" stroke="#fff"/><path d="M7 4h6v4H7z" fill="#fff"/></svg>
    <svg class="tray-ic tray-wifi" viewBox="0 0 16 14"><path d="M1 13C2 6 7 2 14 1M5 13c.5-3.500 3-6 6.500-7M8.500 13c.3-1.200 1-2.200 2.500-3" fill="none" stroke="#c8c8c8"/><circle cx="12.500" cy="12" r="1.500" fill="#fff"/></svg>
    <svg class="tray-ic tray-sound" viewBox="0 0 16 14"><path d="M1 5h2.500L7 1.500v11L3.500 9H1z" fill="none" stroke="#fff"/><path d="M9.500 4.500c1 1.500 1 3.500 0 5M12 3c1.500 2.500 1.500 5.500 0 8" fill="none" stroke="#fff"/><path d="M14.500 1.500c2 3 2 8 0 11" fill="none" stroke="#777"/></svg>
    <div class="clock"><div>23.27</div><div>26/04/2021</div></div>
    <div class="notif">
      <svg class="tray-ic notif-ic" viewBox="0 0 16 16"><path d="M0 0h16v12H7l-3 3v-3H0z" fill="#fff"/><path d="M3 3h10M3 6h10M3 9h7" stroke="#222" stroke-width="1"/></svg>
      <span class="notif-badge">1</span>
    </div>
  </div>
</footer>
</body>
</html>
```

FILE: styles.css
```css
* { box-sizing: border-box; }
html, body { margin: 0; padding: 0; }
body {
  width: 1280px;
  height: 800px;
  overflow: hidden;
  display: flex;
  flex-direction: column;
  position: relative;
  background: #fff;
  font-family: "Open Sans", "Noto Sans", sans-serif;
  font-size: 13px;
  color: #24292e;
}
.defs { position: absolute; }
a { color: inherit; text-decoration: none; }
svg { display: block; flex: none; }
b { font-weight: 600; }

/* Browser tab strip */
.tabstrip {
  height: 34px;
  flex: none;
  display: flex;
  align-items: stretch;
  padding-left: 7px;
  background: #0f3864;
  color: #fff;
}
.tab {
  width: 240px;
  display: flex;
  align-items: center;
  padding: 0 11px 0 13px;
  font-size: 11.2px;
  position: relative;
}
.tab-sep::before {
  content: "";
  position: absolute;
  left: 0;
  top: 8px;
  height: 18px;
  width: 1px;
  background: #5b7da3;
}
.tab-active {
  background: #15549b;
  border-radius: 9px 9px 0 0;
  padding-left: 11px;
}
.tab-active::before, .tab-active::after {
  content: "";
  position: absolute;
  bottom: 0;
  width: 8px;
  height: 8px;
}
.tab-active::before { left: -8px; background: radial-gradient(circle at 0 0, transparent 8px, #15549b 8.5px); }
.tab-active::after { right: -8px; background: radial-gradient(circle at 100% 0, transparent 8px, #15549b 8.5px); }
.fav { width: 16px; height: 16px; margin-right: 8px; margin-top: -1px; }
.fav-white { fill: #fff; }
.tab-title {
  flex: 1;
  margin-top: -2px;
  white-space: nowrap;
  -webkit-mask-image: linear-gradient(90deg, #000 85%, transparent 96%);
  mask-image: linear-gradient(90deg, #000 85%, transparent 96%);
}
.tab-x { width: 10px; height: 10px; margin-left: 2px; color: #fff; margin-top: -1px; }
.newtab { width: 16px; height: 16px; fill: #fff; align-self: center; margin-left: 13px; margin-top: -1px; }
.strip-right { margin-left: auto; display: flex; align-items: flex-start; }
.media-drop { width: 16px; height: 16px; margin: 8px 13px 0 0; }
.win-btn { width: 46px; height: 20px; }

/* Browser toolbar */
.toolbar {
  height: 34px;
  flex: none;
  display: flex;
  align-items: center;
  padding-left: 14px;
  background: #15549b;
  color: #fff;
}
.tool { width: 16px; height: 16px; margin-right: 16px; }
.omnibox {
  width: 1064px;
  height: 28px;
  margin-left: -2px;
  border-radius: 14px;
  background: #1c4878;
  display: flex;
  align-items: center;
  padding: 0 10px 0 13px;
  font-size: 13.2px;
  color: #a9bdd3;
}
.lock { width: 12px; height: 14px; margin-right: 9px; }
.url { flex: 1; white-space: nowrap; }
.url-host { color: #fff; font-weight: 400; }
.omni-star { width: 16px; height: 16px; fill: #cfd8e3; }
.media-q { width: 16px; height: 16px; margin-left: 14px; }
.profile { width: 22px; height: 22px; margin-left: 13px; }
.dots { width: 4px; height: 16px; margin-left: 20px; }

/* Bookmarks bar */
.bookmarks {
  height: 34px;
  flex: none;
  display: grid;
  grid-template-columns: 66px 72px 86px 70px 153px 154px 154px 154px 155px 174px 1fr;
  align-items: center;
  padding: 0 0 3px 15px;
  background: #15549b;
  color: #fff;
  font-size: 11.2px;
}
.bm { display: flex; align-items: center; white-space: nowrap; }
.bm-ic { width: 16px; height: 16px; margin-right: 8px; }
.bm-apps { width: 14px; height: 14px; margin-right: 9px; }
.tiny-svg { font: 700 7px "Liberation Sans", sans-serif; text-anchor: middle; fill: #c8402a; }
.tiny-white { fill: #fff; }
.bm-more { font-size: 14px; font-weight: 600; }

/* GitHub header */
.gh-head {
  height: 63px;
  flex: none;
  display: flex;
  align-items: center;
  padding: 0 32px;
  background: #24292e;
  color: #fff;
}
.gh-logo { width: 32px; height: 32px; fill: #fff; margin-right: 16px; margin-top: -1px; }
.gh-search {
  width: 272px;
  height: 30px;
  margin-top: -2px;
  border: 1px solid #4a5056;
  border-radius: 6px;
  display: flex;
  align-items: center;
  justify-content: space-between;
  padding: 0 8px 0 12px;
  color: #d0d3d5;
  font-size: 13px;
  margin-right: 16px;
}
.gh-search-text { margin-top: 2px; }
.gh-slash {
  width: 19px;
  height: 20px;
  border: 1px solid #4a5056;
  border-radius: 3px;
  display: flex;
  align-items: center;
  justify-content: center;
  font: 11px "Open Sans", sans-serif;
  color: #8b9095;
}
.gh-link { font-weight: 700; font-size: 12.6px; margin-right: 15px; margin-top: 3px; white-space: nowrap; }
.gh-right { margin-left: auto; margin-top: 3px; display: flex; align-items: center; }
.gh-ic { width: 16px; height: 16px; fill: #fff; }
.gh-plus { margin-left: 16px; margin-right: 5px; }
.gh-avatar { width: 20px; height: 20px; margin: 0 4px 0 15px; }
.caret { display: inline-block; width: 0; height: 0; border: 4px solid transparent; border-top-color: #586069; border-bottom: 0; flex: none; }
.caret-white { border-top-color: #fff; }
.caret-dark { border-top-color: #586069; }

/* Repo header */
.repo-head {
  height: 112px;
  flex: none;
  background: #fafbfc;
  border-bottom: 1px solid #e1e4e8;
  padding: 18px 32px 0;
  display: flex;
  flex-direction: column;
  justify-content: space-between;
}
.repo-title-row { display: flex; justify-content: space-between; align-items: center; height: 28px; }
.repo-title { margin: -1px 0 0; display: flex; align-items: center; font-size: 18.8px; font-weight: 400; color: #586069; white-space: nowrap; }
.link { color: #0366d6; }
.repo-ic { margin-right: 8px; }
.repo-slash { margin: 0 4px; }
.repo-name { font-weight: 600; }
.ic { width: 16px; height: 16px; flex: none; fill: #959da5; }
.ic-muted { fill: #6a737d; }
.ic-dim { fill: #959da5; }
.ic-dark { fill: #24292e; }
.ic-green { fill: #28a745; }
.ic-file { fill: #959da5; }
.repo-actions { display: flex; gap: 10px; }
.pair {
  display: flex;
  height: 28px;
  border: 1px solid #e1e4e8;
  border-radius: 6px;
  font-size: 11.2px;
  font-weight: 500;
  background: #fafbfc;
  box-shadow: 0 1px 0 rgba(27, 31, 35, .04);
}
.pair-main { display: flex; align-items: center; padding-left: 12px; border-right: 1px solid #e1e4e8; }
.pair-main .ic { margin-right: 3px; }
.w-unwatch { width: 107px; }
.w-star { width: 69px; }
.w-star .ic { margin-right: 7px; }
.w-fork { width: 68px; }
.w-fork .ic { margin-right: 6px; }
.pair-dim { color: #8d949b; }
.caret-gap { margin-left: 8px; }
.pair-count { display: flex; align-items: center; justify-content: center; color: #24292e; }
.c-1 { width: 29px; }
.c-2, .c-3 { width: 31px; }
.repo-tabs { display: flex; height: 45px; margin-bottom: -1px; }
.rtab {
  display: flex;
  align-items: center;
  gap: 8px;
  padding: 0 16px 4px;
  font-size: 13px;
  color: #24292e;
  border-bottom: 2px solid transparent;
  white-space: nowrap;
}
.rtab-on { font-weight: 600; border-bottom-color: #f9826c; gap: 6px; }
.rtab-nudge { margin-left: 1px; }

/* Main */
.content { padding: 32px 32px 0; flex: none; }
.path-row { display: flex; align-items: center; height: 32px; margin-bottom: 16px; }
.btn {
  height: 32px;
  border: 1px solid #e1e4e8;
  border-radius: 6px;
  background: #fafbfc;
  color: #24292e;
  font: 600 13px "Open Sans", "Noto Sans", sans-serif;
  display: flex;
  align-items: center;
  justify-content: center;
  box-shadow: 0 1px 0 rgba(27, 31, 35, .04);
  padding: 0;
}
.btn-branch { width: 105px; gap: 8px; }
.crumbs { margin-left: 8px; display: flex; align-items: center; gap: 5px; font-size: 15px; color: #586069; }
.crumb-root { font-weight: 600; }
.crumb-cur { color: #24292e; }
.path-actions { margin-left: auto; display: flex; gap: 8px; }
.btn-goto { width: 92px; }
.btn-add { width: 96px; gap: 5px; }
.btn-more { width: 50px; }

.filebox { border: 1px solid #e1e4e8; border-radius: 6px; overflow: hidden; }
.commit {
  height: 55px;
  margin: -1px -1px 0;
  display: flex;
  align-items: center;
  padding: 0 16px 0 12px;
  background: #f1f8ff;
  border: 1px solid #c8e1ff;
  border-radius: 6px 6px 0 0;
}
.commit-avatar { width: 24px; height: 24px; margin-right: 12px; }
.commit-author { font-weight: 600; margin-right: 4px; }
.commit-right { margin-left: auto; display: flex; align-items: center; color: #586069; }
.sha { font: 11.2px "Liberation Mono", monospace; margin: 0 8px 0 7px; }
.age { color: #586069; font-size: 13.3px; }
.history { display: flex; align-items: center; gap: 5px; margin-left: 16px; font-weight: 600; color: #24292e; }
.row { display: flex; align-items: center; border-top: 1px solid #eaecef; }
.row-up { height: 36px; border-top: 0; padding-left: 19px; }
.up { font-size: 14px; letter-spacing: 1px; }
.row-file { height: 38px; background: #f6f8fa; padding: 0 16px; }
.row-file .ic-file { margin-right: 16px; }
.fname { width: 377px; }
.fmsg { color: #586069; font-size: 13.1px; }
.fage { margin-left: auto; }

/* Footer */
.footer { padding: 56px 16px 0; flex: none; font-size: 11.4px; }
.foot-inner { border-top: 1px solid #eaecef; padding-top: 40px; display: flex; justify-content: space-between; align-items: flex-start; }
.foot-group { display: flex; line-height: 18px; white-space: nowrap; }
.foot-left { gap: 49px; color: #586069; }
.foot-right { gap: 57.4px; }
.foot-logo { width: 24px; height: 24px; fill: #c6cbd1; }
.activate { position: absolute; left: 991px; top: 680px; color: #c9cacb; }
.act-1 { font-size: 19px; line-height: 25px; }
.act-2 { font-size: 14.4px; line-height: 20px; }

/* Taskbar */
.taskbar {
  margin-top: auto;
  height: 40px;
  flex: none;
  display: flex;
  background: #0b0f11;
  color: #fff;
}
.tb-item { width: 48px; height: 40px; display: flex; align-items: center; justify-content: center; position: relative; }
.tb-task, .tb-store { width: 50px; }
.tb-edge, .tb-open { width: 49px; }
.tb-open::after { content: ""; position: absolute; left: 4px; right: 4px; bottom: 0; height: 2px; background: #76d9f7; }
.tb-chrome { background: #3a3d3e; }
.tb-chrome::after { left: 0; right: 0; }
.tb-ic { width: 16px; height: 16px; }
.tb-wide { width: 20px; height: 14px; }
.tb-big { width: 24px; height: 24px; }
.tb-badge { position: absolute; left: 25px; top: 17px; width: 15px; height: 15px; }
.tb-a { font: 700 16px "Liberation Sans", sans-serif; fill: #fff; }
.tray { margin-left: auto; display: flex; align-items: center; }
.tray-ic { flex: none; }
.tray-caret { width: 12px; height: 8px; margin-right: 9px; }
.tray-batt { width: 16px; height: 12px; margin-right: 10px; }
.tray-wifi { width: 16px; height: 14px; margin-right: 7px; }
.tray-sound { width: 16px; height: 14px; margin-right: 3px; }
.clock { width: 68px; text-align: center; font-size: 11px; line-height: 17px; margin: -2px 7px 0 0; }
.notif { width: 48px; height: 40px; position: relative; display: flex; align-items: center; justify-content: center; }
.notif-ic { width: 16px; height: 16px; margin-top: -4px; margin-left: -18px; }
.notif-badge {
  position: absolute;
  left: 15px;
  top: 19px;
  width: 16px;
  height: 16px;
  border-radius: 50%;
  background: #3e4244;
  font-size: 11px;
  line-height: 16px;
  text-align: center;
}
```
